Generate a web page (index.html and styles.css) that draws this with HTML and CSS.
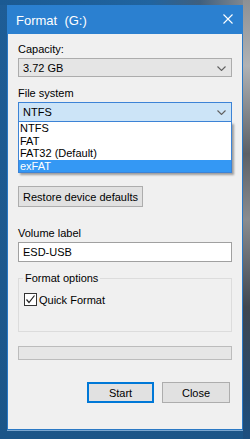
FILE: index.html
```html
<!DOCTYPE html>
<html lang="en">
<head>
  <meta charset="UTF-8">
  <meta name="viewport" content="width=device-width, initial-scale=1.0">
  <title>Format (G:)</title>
  <link rel="stylesheet" href="styles.css">
</head>
<body>
  <div class="window">
    <div class="titlebar">
      <span class="title">Format&nbsp; (G:)</span>
      <svg class="close-x" width="10" height="10" viewBox="0 0 10 10">
        <path d="M0.5 0.5 L9.5 9.5 M9.5 0.5 L0.5 9.5" stroke="#fff" stroke-width="1.1" fill="none"/>
      </svg>
    </div>
    <div class="content">
      <div class="label first">Capacity:</div>
      <div class="combo disabled">
        <span>3.72 GB</span>
        <svg class="chevron" width="9" height="5" viewBox="0 0 9 5"><polyline points="0.5,0.5 4.5,4.5 8.5,0.5" fill="none" stroke="#606060" stroke-width="1.1"/></svg>
      </div>

      <div class="label">File system</div>
      <div class="combo-wrap">
        <div class="combo active">
          <span>NTFS</span>
          <svg class="chevron" width="9" height="5" viewBox="0 0 9 5"><polyline points="0.5,0.5 4.5,4.5 8.5,0.5" fill="none" stroke="#606060" stroke-width="1.1"/></svg>
        </div>
        <ul class="dropdown">
          <li>NTFS</li>
          <li>FAT</li>
          <li>FAT32 (Default)</li>
          <li class="selected">exFAT</li>
        </ul>
      </div>

      <button class="btn restore">Restore device defaults</button>

      <div class="label volume">Volume label</div>
      <div class="textbox">ESD-USB</div>

      <fieldset class="group">
        <legend>Format options</legend>
        <label class="check">
          <span class="box">
            <svg width="11" height="11" viewBox="0 0 11 11"><polyline points="1.5,5.5 4,8.5 9.5,1.5" fill="none" stroke="#222" stroke-width="1.2"/></svg>
          </span>
          Quick Format
        </label>
      </fieldset>

      <div class="progress"></div>

      <div class="actions">
        <button class="btn default">Start</button>
        <button class="btn">Close</button>
      </div>
    </div>
  </div>
</body>
</html>
```

FILE: styles.css
```css
body {
  margin: 0;
  width: 250px;
  height: 439px;
  overflow: hidden;
  font-family: 'Segoe UI', 'Liberation Sans', Arial, sans-serif;
  font-size: 11px;
  color: #000;
  background:
    linear-gradient(to bottom, #8d9094 0%, #b0b2b4 15%, #5c6066 35%, #8a8c8f 50%, #3f4650 70%, #24496e 90%, #1c4f80 100%) right top / 7px 100% no-repeat,
    linear-gradient(to right, #1b5a92 0%, #2064a0 60%, #3f5f7e 80%, #8b8e92 100%) left top / 100% 5px no-repeat,
    linear-gradient(to bottom, #1e5d96, #1b5588);
}
.window {
  margin: 5px 0 0 7px;
  width: 234px;
  height: 424px;
  background: #f0f0f0;
  border: 1px solid #2a78c4;
  border-top: none;
  box-shadow: 0 1px 0 #7aa6cf;
  display: flex;
  flex-direction: column;
}
.titlebar {
  height: 29px;
  background: #2b80d0;
  color: #fff;
  display: flex;
  align-items: center;
  justify-content: space-between;
  padding: 0 9px 0 9px;
  margin: 0 -1px;
  flex-shrink: 0;
}
.title {
  font-size: 13px;
  padding-top: 1px;
}
.close-x {
  margin-right: 1px;
  margin-top: -1px;
}
.content {
  padding: 0 10px;
  display: flex;
  flex-direction: column;
}
.label {
  height: 15px;
  line-height: 15px;
  margin-top: 9px;
  margin-bottom: 1px;
}
.label.first {
  margin-top: 8px;
}
.label.volume {
  margin-top: 19px;
}
.combo {
  height: 19px;
  box-sizing: border-box;
  border: 1px solid #acacac;
  background: #e5e5e5;
  display: flex;
  align-items: center;
  justify-content: space-between;
  padding: 0 5px 0 4px;
}
.combo.active {
  height: 20px;
  border-color: #3c83d6;
  background: #cce4f7;
}
.chevron {
  margin-top: 1px;
}
.combo-wrap {
  position: relative;
}
.dropdown {
  position: absolute;
  top: 20px;
  left: 0;
  right: 0;
  margin: 0;
  padding: 0;
  list-style: none;
  background: #fff;
  border: 1px solid #3c83d6;
  border-top: none;
  box-shadow: 2px 2px 2px rgba(0, 0, 0, 0.35);
  z-index: 5;
}
.dropdown li {
  height: 12.5px;
  line-height: 12px;
  padding-left: 1px;
}
.dropdown li.selected {
  background: #3498f4;
  color: #fff;
}
.btn {
  font-family: inherit;
  font-size: 11px;
  color: #000;
  background: #e1e1e1;
  border: 1px solid #adadad;
  height: 21px;
  padding: 0;
  box-sizing: border-box;
}
.restore {
  align-self: flex-start;
  width: 125px;
  margin-top: 64px;
}
.textbox {
  height: 20px;
  box-sizing: border-box;
  border: 1px solid #a0a0a0;
  background: #fff;
  padding: 0 4px;
  line-height: 18px;
}
.group {
  margin: 10px 0 0 0;
  padding: 0 5px;
  height: 60px;
  box-sizing: border-box;
  border: 1px solid #dcdcdc;
  min-width: 0;
}
.group legend {
  padding: 0 2px;
  margin-left: -1px;
  line-height: 13px;
}
.check {
  display: flex;
  align-items: center;
  gap: 2px;
  margin-top: 8px;
}
.box {
  width: 11px;
  height: 11px;
  border: 1px solid #333;
  background: #fff;
  display: flex;
}
.progress {
  margin-top: 14px;
  height: 12px;
  background: #e6e6e6;
  border: 1px solid #bcbcbc;
}
.actions {
  display: flex;
  justify-content: flex-end;
  gap: 8px;
  margin-top: 22px;
  padding-right: 2px;
}
.actions .btn {
  width: 68px;
}
.actions .default {
  width: 67px;
  border: 2px solid #0078d7;
}
```
